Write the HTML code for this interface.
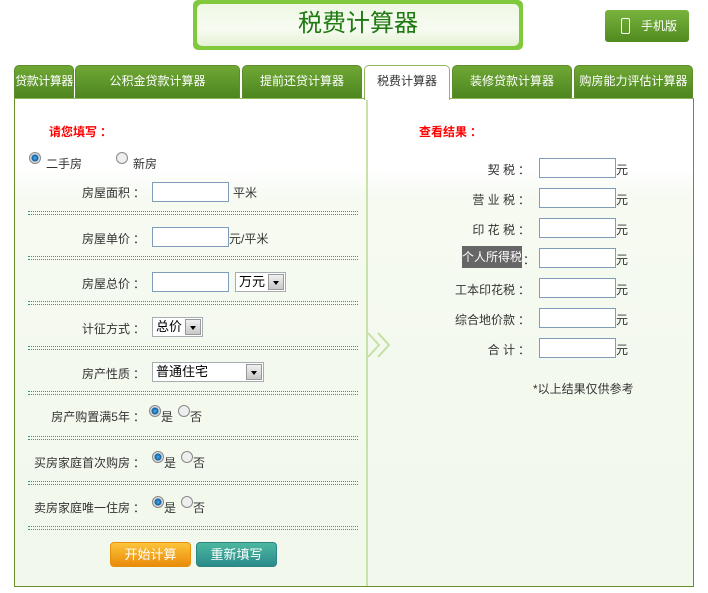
<!DOCTYPE html>
<html><head><meta charset="utf-8"><style>
*{margin:0;padding:0;box-sizing:border-box}
body{width:708px;height:593px;background:#fff;font-family:"Liberation Sans","Noto Sans CJK SC",sans-serif;font-size:12px;color:#333;position:relative;overflow:hidden}
.a{position:absolute;white-space:nowrap}
.c{margin-left:3px}
.title{left:193px;top:0;width:330px;height:50px;background:#80c83c;border-radius:5px;padding:4px}
.title div{width:100%;height:100%;border-radius:5px;background:linear-gradient(#eef8e4,#f7fbf1 60%,#e4f1d4);text-align:center;font-size:24px;line-height:40px;color:#1f7a12}
.mob{left:605px;top:10px;width:84px;height:32px;border-radius:3px;background:linear-gradient(#7ab43f,#4f8a1f);color:#fff;font-size:12px;line-height:32px;text-align:right;padding-right:12px}
.mob i{position:absolute;left:16px;top:8px;width:9px;height:16px;border:1.5px solid #fff;border-radius:2px}
.tab{top:65px;height:34px;background:linear-gradient(#6fa834,#4d8520);color:#fff;text-align:center;line-height:31px;border-radius:5px 5px 0 0;border:1px solid #5d8c2a;overflow:hidden}
.tab.on{background:#fff;color:#333;border-color:#8eb85a;border-bottom:none;z-index:2;height:35px}
.box{left:14px;top:98px;width:680px;height:489px;border:1px solid #6a8f2a;border-top:1px solid #8eb85a;background:linear-gradient(#fff 70px,#f6faf1 100px,#f2f8ec)}
.vl{left:366px;top:99px;width:2px;height:487px;background:#c8e3a8}
.lb{text-align:right;width:120px}
.inp{background:#fff;border:1px solid #7f9db9;height:20px}
.dot{left:28px;width:330px;height:4px;border-top:1px dotted #2a9a8a;border-bottom:1px dotted #2a9a8a}
.sel{background:#fff;border:1px solid #a5acb2;height:20px;font-size:13px;line-height:18px;padding-left:3px;color:#000}
.sel b{position:absolute;right:1px;top:1px;width:16px;height:16px;background:linear-gradient(#f0f0f0,#c8c8c8);border:1px solid #999}
.sel b:after{content:"";position:absolute;left:4px;top:6px;border:3px solid transparent;border-top:4px solid #000}
.rad{width:12px;height:12px;border-radius:50%;border:1px solid #888;background:#eee}
.rad.on{background:radial-gradient(#4ab0f0 0,#1060a0 3px,#ddd 4px)}
.btn{top:542px;width:81px;height:25px;border-radius:4px;color:#fff;font-size:13px;text-align:center;line-height:24px}
</style></head><body>
<div class="a title"><div>税费计算器</div></div>
<div class="a mob"><i></i>手机版</div>
<div class="a tab" style="left:14px;width:60px;font-size:12px;letter-spacing:-0.5px">贷款计算器</div>
<div class="a tab" style="left:75px;width:165px">公积金贷款计算器</div>
<div class="a tab" style="left:242px;width:120px">提前还贷计算器</div>
<div class="a tab on" style="left:364px;width:86px">税费计算器</div>
<div class="a tab" style="left:452px;width:120px">装修贷款计算器</div>
<div class="a tab" style="left:574px;width:119px">购房能力评估计算器</div>
<div class="a box"></div>
<div class="a vl"></div>
<svg class="a" style="left:366px;top:331px" width="30" height="28"><path d="M2 2L13 14L2 26M12 2L23 14L12 26" fill="none" stroke="#c6e0a4" stroke-width="2"/></svg>
<div class="a" style="left:49px;top:123px;color:#f00;font-weight:bold">请您填写<span class="c">：</span></div>
<div class="a rad on" style="left:29px;top:152px"></div><div class="a" style="left:46px;top:155px">二手房</div>
<div class="a rad" style="left:116px;top:152px"></div><div class="a" style="left:133px;top:155px">新房</div>

<div class="a lb" style="left:25px;top:184px">房屋面积<span class="c">：</span></div><div class="a inp" style="left:152px;top:182px;width:77px"></div><div class="a" style="left:233px;top:184px">平米</div>
<div class="a dot" style="top:211px"></div>
<div class="a lb" style="left:25px;top:230px">房屋单价<span class="c">：</span></div><div class="a inp" style="left:152px;top:227px;width:77px"></div><div class="a" style="left:229px;top:230px">元/平米</div>
<div class="a dot" style="top:256px"></div>
<div class="a lb" style="left:25px;top:275px">房屋总价<span class="c">：</span></div><div class="a inp" style="left:152px;top:272px;width:77px"></div><div class="a sel" style="left:235px;top:272px;width:51px">万元<b></b></div>
<div class="a dot" style="top:301px"></div>
<div class="a lb" style="left:25px;top:320px">计征方式<span class="c">：</span></div><div class="a sel" style="left:152px;top:317px;width:51px">总价<b></b></div>
<div class="a dot" style="top:346px"></div>
<div class="a lb" style="left:25px;top:365px">房产性质<span class="c">：</span></div><div class="a sel" style="left:152px;top:362px;width:112px">普通住宅<b></b></div>
<div class="a dot" style="top:391px"></div>
<div class="a lb" style="left:25px;top:408px">房产购置满5年<span class="c">：</span></div><div class="a rad on" style="left:149px;top:405px"></div><div class="a" style="left:161px;top:408px">是</div><div class="a rad" style="left:178px;top:405px"></div><div class="a" style="left:190px;top:408px">否</div>
<div class="a dot" style="top:436px"></div>
<div class="a lb" style="left:25px;top:454px">买房家庭首次购房<span class="c">：</span></div><div class="a rad on" style="left:152px;top:451px"></div><div class="a" style="left:164px;top:454px">是</div><div class="a rad" style="left:181px;top:451px"></div><div class="a" style="left:193px;top:454px">否</div>
<div class="a dot" style="top:481px"></div>
<div class="a lb" style="left:25px;top:499px">卖房家庭唯一住房<span class="c">：</span></div><div class="a rad on" style="left:152px;top:496px"></div><div class="a" style="left:164px;top:499px">是</div><div class="a rad" style="left:181px;top:496px"></div><div class="a" style="left:193px;top:499px">否</div>
<div class="a dot" style="top:526px"></div>
<div class="a btn" style="left:110px;background:linear-gradient(#fcc43a,#e98a0a);border:1px solid #e5900c">开始计算</div>
<div class="a btn" style="left:196px;background:linear-gradient(#4cb8a0,#2a8a8a);border:1px solid #2a8585">重新填写</div>

<div class="a" style="left:419px;top:123px;color:#f00;font-weight:bold">查看结果<span class="c">：</span></div>
<div class="a lb" style="left:410px;top:161px">契 税<span class="c">：</span></div><div class="a inp" style="left:539px;top:158px;width:77px"></div><div class="a" style="left:616px;top:161px">元</div>
<div class="a lb" style="left:410px;top:191px">营 业 税<span class="c">：</span></div><div class="a inp" style="left:539px;top:188px;width:77px"></div><div class="a" style="left:616px;top:191px">元</div>
<div class="a lb" style="left:410px;top:221px">印 花 税<span class="c">：</span></div><div class="a inp" style="left:539px;top:218px;width:77px"></div><div class="a" style="left:616px;top:221px">元</div>
<div class="a" style="left:462px;top:246px;width:60px;height:22px;background:#666;color:#fff;line-height:22px">个人所得税</div><div class="a" style="left:523px;top:251px">：</div><div class="a inp" style="left:539px;top:248px;width:77px"></div><div class="a" style="left:616px;top:251px">元</div>
<div class="a lb" style="left:410px;top:281px">工本印花税<span class="c">：</span></div><div class="a inp" style="left:539px;top:278px;width:77px"></div><div class="a" style="left:616px;top:281px">元</div>
<div class="a lb" style="left:410px;top:311px">综合地价款<span class="c">：</span></div><div class="a inp" style="left:539px;top:308px;width:77px"></div><div class="a" style="left:616px;top:311px">元</div>
<div class="a lb" style="left:410px;top:341px">合 计<span class="c">：</span></div><div class="a inp" style="left:539px;top:338px;width:77px"></div><div class="a" style="left:616px;top:341px">元</div>
<div class="a" style="left:533px;top:380px">*以上结果仅供参考</div>
</body></html>
